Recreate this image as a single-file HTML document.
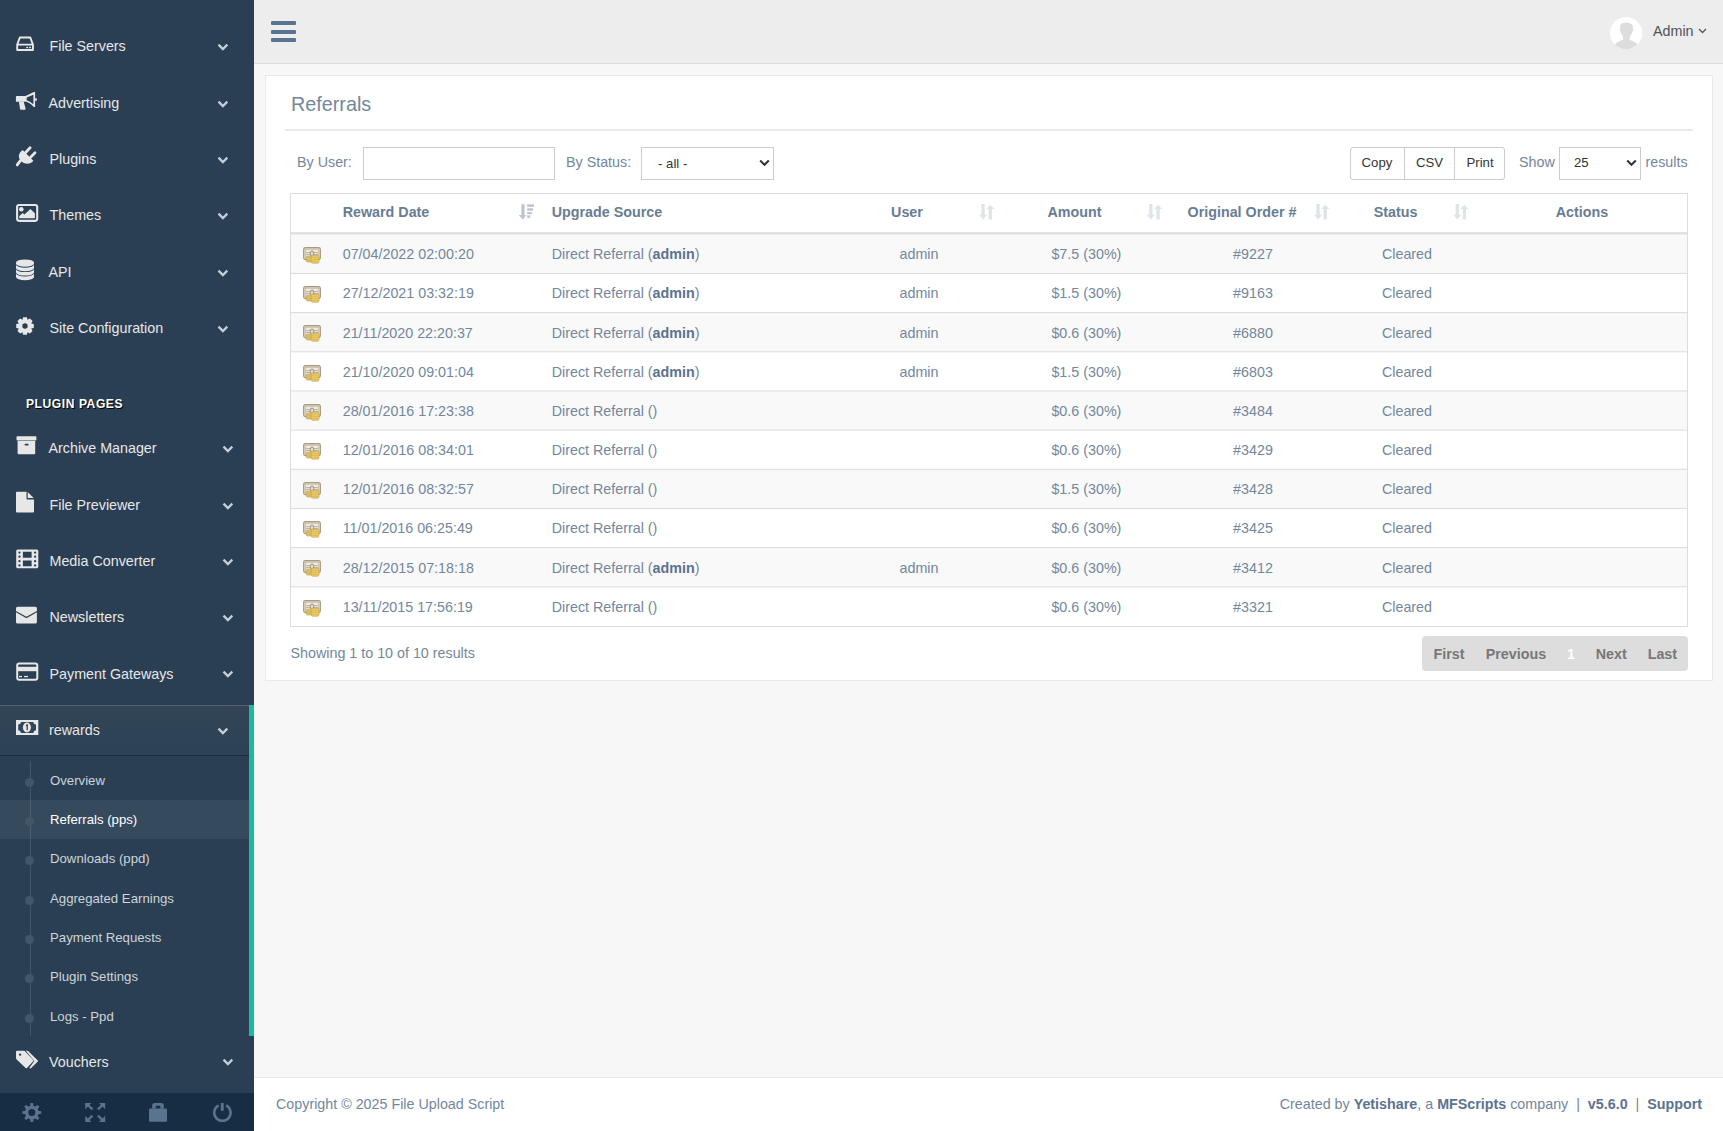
<!DOCTYPE html>
<html><head><meta charset="utf-8"><title>Referrals</title><style>
*{box-sizing:border-box;margin:0;padding:0}
html,body{width:1723px;height:1131px;overflow:hidden}
body{font-family:"Liberation Sans",sans-serif;background:#F7F7F7;color:#73879C;font-size:14.3px;position:relative}
.a{position:absolute;white-space:nowrap}
#side{position:absolute;left:0;top:0;width:254px;height:1131px;background:#2A3F54;overflow:hidden}
.mi{position:absolute;left:0;width:254px;height:20px;line-height:20px;color:#E7E7E7;font-size:14.3px}
.mi .t{position:absolute;top:0}
.mi svg.ic{position:absolute}
.chev{position:absolute;left:217px;top:7px}
.sec{position:absolute;left:26px;color:#fff;font-weight:bold;font-size:12.1px;letter-spacing:.55px;text-shadow:1px 1px #000;line-height:14px}
.ci{position:absolute;left:0;width:249px;height:39px}
.ci .t{position:absolute;left:50px;top:0;line-height:20px;font-size:13.2px;color:rgba(255,255,255,.75)}
.ci .dot{position:absolute;left:25px;width:9px;height:9px;border-radius:50%;background:#425668}
#top{position:absolute;left:254px;top:0;width:1469px;height:64px;background:#EDEDED;border-bottom:1px solid #D9DEE4}
#panel{position:absolute;left:265px;top:75px;width:1448px;height:606px;background:#fff;border:1px solid #E6E9ED}
.box{position:absolute;border:1px solid #ccc;background:#fff}
#tbl{position:absolute;left:290px;top:193px;width:1398px;border:1px solid #ddd}
.row{position:absolute;left:0;width:1396px;height:39px;border-top:1px solid #ddd}
.row.odd{background:#f9f9f9}
.cell{position:absolute;white-space:nowrap;line-height:20px}
.th{font-weight:bold;color:#5A738E}
#foot{position:absolute;left:254px;top:1077px;width:1469px;height:54px;background:#fff;border-top:1px solid #E6E9ED}
</style></head><body>
<div id="side">
<div class="a" style="left:49.5px;top:36.15px;line-height:20px;color:#E7E7E7">File Servers</div>
<svg class="a" style="left:217.2px;top:42.90px" width="12" height="9" viewBox="0 0 12 9"><path d="M1.5 1.6 L5.9 6 L10.3 1.6" fill="none" stroke="#C4CFDA" stroke-width="2.3"/></svg>
<div class="a" style="left:48.5px;top:93.05px;line-height:20px;color:#E7E7E7">Advertising</div>
<svg class="a" style="left:217.2px;top:99.80px" width="12" height="9" viewBox="0 0 12 9"><path d="M1.5 1.6 L5.9 6 L10.3 1.6" fill="none" stroke="#C4CFDA" stroke-width="2.3"/></svg>
<div class="a" style="left:49.5px;top:149.05px;line-height:20px;color:#E7E7E7">Plugins</div>
<svg class="a" style="left:217.2px;top:155.80px" width="12" height="9" viewBox="0 0 12 9"><path d="M1.5 1.6 L5.9 6 L10.3 1.6" fill="none" stroke="#C4CFDA" stroke-width="2.3"/></svg>
<div class="a" style="left:49.5px;top:204.85px;line-height:20px;color:#E7E7E7">Themes</div>
<svg class="a" style="left:217.2px;top:211.60px" width="12" height="9" viewBox="0 0 12 9"><path d="M1.5 1.6 L5.9 6 L10.3 1.6" fill="none" stroke="#C4CFDA" stroke-width="2.3"/></svg>
<div class="a" style="left:48.5px;top:261.85px;line-height:20px;color:#E7E7E7">API</div>
<svg class="a" style="left:217.2px;top:268.60px" width="12" height="9" viewBox="0 0 12 9"><path d="M1.5 1.6 L5.9 6 L10.3 1.6" fill="none" stroke="#C4CFDA" stroke-width="2.3"/></svg>
<div class="a" style="left:49.5px;top:318.25px;line-height:20px;color:#E7E7E7">Site Configuration</div>
<svg class="a" style="left:217.2px;top:325.00px" width="12" height="9" viewBox="0 0 12 9"><path d="M1.5 1.6 L5.9 6 L10.3 1.6" fill="none" stroke="#C4CFDA" stroke-width="2.3"/></svg>
<div class="a" style="left:48.5px;top:437.85px;line-height:20px;color:#E7E7E7">Archive Manager</div>
<svg class="a" style="left:221.7px;top:444.60px" width="12" height="9" viewBox="0 0 12 9"><path d="M1.5 1.6 L5.9 6 L10.3 1.6" fill="none" stroke="#C4CFDA" stroke-width="2.3"/></svg>
<div class="a" style="left:49.5px;top:494.75px;line-height:20px;color:#E7E7E7">File Previewer</div>
<svg class="a" style="left:221.7px;top:501.50px" width="12" height="9" viewBox="0 0 12 9"><path d="M1.5 1.6 L5.9 6 L10.3 1.6" fill="none" stroke="#C4CFDA" stroke-width="2.3"/></svg>
<div class="a" style="left:49.5px;top:550.95px;line-height:20px;color:#E7E7E7">Media Converter</div>
<svg class="a" style="left:221.7px;top:557.70px" width="12" height="9" viewBox="0 0 12 9"><path d="M1.5 1.6 L5.9 6 L10.3 1.6" fill="none" stroke="#C4CFDA" stroke-width="2.3"/></svg>
<div class="a" style="left:49.5px;top:606.75px;line-height:20px;color:#E7E7E7">Newsletters</div>
<svg class="a" style="left:221.7px;top:613.50px" width="12" height="9" viewBox="0 0 12 9"><path d="M1.5 1.6 L5.9 6 L10.3 1.6" fill="none" stroke="#C4CFDA" stroke-width="2.3"/></svg>
<div class="a" style="left:49.5px;top:663.65px;line-height:20px;color:#E7E7E7">Payment Gateways</div>
<svg class="a" style="left:221.7px;top:670.40px" width="12" height="9" viewBox="0 0 12 9"><path d="M1.5 1.6 L5.9 6 L10.3 1.6" fill="none" stroke="#C4CFDA" stroke-width="2.3"/></svg>
<div class="sec" style="top:397.30px">PLUGIN PAGES</div>
<div style="position:absolute;left:0;top:704.5px;width:249px;height:50px;background:linear-gradient(#334556,#2C4257);box-shadow:rgba(0,0,0,.25) 0 1px 0, inset rgba(255,255,255,.16) 0 1px 0"></div>
<div style="position:absolute;left:249px;top:704.5px;width:5px;height:331px;background:#1ABB9C"></div>
<div class="a" style="left:49px;top:719.85px;line-height:20px;color:#E7E7E7;text-shadow:rgba(0,0,0,.25) 0 -1px 0">rewards</div>
<svg class="a" style="left:217.2px;top:726.60px" width="12" height="9" viewBox="0 0 12 9"><path d="M1.5 1.6 L5.9 6 L10.3 1.6" fill="none" stroke="#C4CFDA" stroke-width="2.3"/></svg>
<div style="position:absolute;left:29.5px;top:760.5px;width:1px;height:275px;background:#425668"></div>
<div style="position:absolute;left:0;top:799.8px;width:249px;height:39.7px;background:rgba(255,255,255,.06)"></div>
<div class="a" style="left:25px;top:777.50px;width:9px;height:9px;border-radius:50%;background:#425668"></div>
<div class="a" style="left:50px;top:770.53px;line-height:20px;font-size:13.2px;color:rgba(255,255,255,.78)">Overview</div>
<div class="a" style="left:25px;top:816.85px;width:9px;height:9px;border-radius:50%;background:#425668"></div>
<div class="a" style="left:50px;top:809.88px;line-height:20px;font-size:13.2px;color:#fff">Referrals (pps)</div>
<div class="a" style="left:25px;top:856.20px;width:9px;height:9px;border-radius:50%;background:#425668"></div>
<div class="a" style="left:50px;top:849.23px;line-height:20px;font-size:13.2px;color:rgba(255,255,255,.78)">Downloads (ppd)</div>
<div class="a" style="left:25px;top:895.55px;width:9px;height:9px;border-radius:50%;background:#425668"></div>
<div class="a" style="left:50px;top:888.58px;line-height:20px;font-size:13.2px;color:rgba(255,255,255,.78)">Aggregated Earnings</div>
<div class="a" style="left:25px;top:934.90px;width:9px;height:9px;border-radius:50%;background:#425668"></div>
<div class="a" style="left:50px;top:927.93px;line-height:20px;font-size:13.2px;color:rgba(255,255,255,.78)">Payment Requests</div>
<div class="a" style="left:25px;top:974.25px;width:9px;height:9px;border-radius:50%;background:#425668"></div>
<div class="a" style="left:50px;top:967.28px;line-height:20px;font-size:13.2px;color:rgba(255,255,255,.78)">Plugin Settings</div>
<div class="a" style="left:25px;top:1013.60px;width:9px;height:9px;border-radius:50%;background:#425668"></div>
<div class="a" style="left:50px;top:1006.63px;line-height:20px;font-size:13.2px;color:rgba(255,255,255,.78)">Logs - Ppd</div>
<div class="a" style="left:49px;top:1051.55px;line-height:20px;color:#E7E7E7">Vouchers</div>
<svg class="a" style="left:221.7px;top:1058.30px" width="12" height="9" viewBox="0 0 12 9"><path d="M1.5 1.6 L5.9 6 L10.3 1.6" fill="none" stroke="#C4CFDA" stroke-width="2.3"/></svg>
<div style="position:absolute;left:0;top:1093px;width:254px;height:38px;background:#172D44"></div>
<svg class="a" style="left:0;top:0" width="254" height="1131" viewBox="0 0 254 1131"><path d="M19.9 37.45 L30.2 37.45 L32.95 44.6 V49.95 H17.2 V44.6 Z M17.2 44.6 H32.95" fill="none" stroke="#E7E7E7" stroke-width="1.9" stroke-linejoin="round"/><rect x="26.2" y="46.8" width="1.9" height="1.4" fill="#E7E7E7"/><rect x="29.1" y="46.8" width="1.9" height="1.4" fill="#E7E7E7"/><path d="M16.8 96 H25.2 V101.8 H16.8 Q15.9 101.8 15.9 100.9 V96.9 Q15.9 96 16.8 96 Z" fill="#E7E7E7"/><path d="M18.9 101.5 H23.6 L25.6 108.6 Q25.8 109.8 24.6 109.8 H21.2 Q20.2 109.8 20 108.8 Z" fill="#E7E7E7"/><path fill-rule="evenodd" d="M25 96.2 L33.8 92 H35.1 V106.9 H33.8 Q29.5 102.2 25 101.6 Z M26.7 97.6 L33.4 94.7 V104.3 Q30 101.2 26.7 100.2 Z" fill="#E7E7E7"/><rect x="34.8" y="98.3" width="2.1" height="2.4" rx="0.8" fill="#E7E7E7"/><path d="M30.1 147.8 L25.6 152.4 M35 152.7 L30.5 157.4 M20.6 160.4 L17.2 164.9" stroke="#E7E7E7" stroke-width="2.8" stroke-linecap="round" fill="none"/><path d="M22.6 150 L33.4 160.8 C31.5 163.5 27.5 164.2 24.5 163.2 C21 162 18.6 158.8 18.9 155.5 C19.1 153.4 20.6 151.5 22.6 150 Z" fill="#E7E7E7"/><rect x="17.1" y="205.05" width="20.1" height="15.8" rx="2" fill="none" stroke="#E7E7E7" stroke-width="2.1"/><circle cx="21.3" cy="209.3" r="2.3" fill="#E7E7E7"/><path d="M19.2 218.2 V216.3 L22.7 212.9 L24.4 214.4 L30.4 208.9 L34.9 213.3 V218.2 Z" fill="#E7E7E7"/><path d="M16 262.7 A9 3.3 0 0 1 34 262.7 V263.5 A9 3.3 0 0 1 16 263.5 Z" fill="#E7E7E7"/><path d="M16 264.50 A9 3.2 0 0 0 34 264.50 V267.90 A9 3.3 0 0 1 16 267.90 Z" fill="#E7E7E7"/><path d="M16 268.90 A9 3.2 0 0 0 34 268.90 V272.30 A9 3.3 0 0 1 16 272.30 Z" fill="#E7E7E7"/><path d="M16 273.30 A9 3.2 0 0 0 34 273.30 V276.90 A9 3.3 0 0 1 16 276.90 Z" fill="#E7E7E7"/><path fill-rule="evenodd" d="M22.46 319.80 L23.11 317.20 L26.89 317.20 L27.54 319.80 L27.59 319.82 L29.89 318.44 L32.56 321.11 L31.18 323.41 L31.20 323.46 L33.80 324.11 L33.80 327.89 L31.20 328.54 L31.18 328.59 L32.56 330.89 L29.89 333.56 L27.59 332.18 L27.54 332.20 L26.89 334.80 L23.11 334.80 L22.46 332.20 L22.41 332.18 L20.11 333.56 L17.44 330.89 L18.82 328.59 L18.80 328.54 L16.20 327.89 L16.20 324.11 L18.80 323.46 L18.82 323.41 L17.44 321.11 L20.11 318.44 L22.41 319.82 Z M27.7 326 A2.7 2.7 0 1 0 22.3 326 A2.7 2.7 0 1 0 27.7 326 Z" fill="#E7E7E7"/><rect x="16.5" y="436.2" width="19.9" height="4.3" rx="0.9" fill="#E7E7E7"/><path fill-rule="evenodd" d="M17.6 441 H35.2 V453.3 Q35.2 454.3 34.2 454.3 H18.6 Q17.6 454.3 17.6 453.3 Z M25.5 443.7 H27.8 Q28.7 443.7 28.7 444.6 Q28.7 445.5 27.8 445.5 H25.5 Q24.6 445.5 24.6 444.6 Q24.6 443.7 25.5 443.7 Z" fill="#E7E7E7"/><path d="M16 492.7 Q16 491.7 17 491.7 H26.5 V498.5 Q26.5 499.6 27.6 499.6 H34 V511.4 Q34 512.4 33 512.4 H17 Q16 512.4 16 511.4 Z" fill="#E7E7E7"/><path d="M27.7 492 L33.7 498.1 H27.7 Z" fill="#E7E7E7"/><path fill-rule="evenodd" d="M17.7 549.4 H36.8 Q38.3 549.4 38.3 550.9 V566.8 Q38.3 568.3 36.8 568.3 H17.7 Q16.2 568.3 16.2 566.8 V550.9 Q16.2 549.4 17.7 549.4 Z M22.9 551.7 H31.6 V557.7 H22.9 Z M22.9 560.4 H31.6 V566.3 H22.9 Z" fill="#E7E7E7"/><circle cx="19.45" cy="552.6" r="1.15" fill="#2A3F54"/><circle cx="35.1" cy="552.6" r="1.15" fill="#2A3F54"/><circle cx="19.45" cy="556.7" r="1.15" fill="#2A3F54"/><circle cx="35.1" cy="556.7" r="1.15" fill="#2A3F54"/><circle cx="19.45" cy="561.2" r="1.15" fill="#2A3F54"/><circle cx="35.1" cy="561.2" r="1.15" fill="#2A3F54"/><circle cx="19.45" cy="565.4" r="1.15" fill="#2A3F54"/><circle cx="35.1" cy="565.4" r="1.15" fill="#2A3F54"/><path d="M16 608.3 Q16 606.7 17.6 606.7 H35.3 Q36.9 606.7 36.9 608.3 V610.9 L26.45 616.8 L16 610.9 Z" fill="#E7E7E7"/><path d="M16 612.35 L26.45 618.25 L36.9 612.35 V621.9 Q36.9 623.5 35.3 623.5 H17.6 Q16 623.5 16 621.9 Z" fill="#E7E7E7"/><rect x="17.2" y="663.5" width="20.1" height="16.3" rx="2" fill="none" stroke="#E7E7E7" stroke-width="2"/><rect x="17" y="666.8" width="20.5" height="4.4" fill="#E7E7E7"/><rect x="19" y="675.9" width="3" height="1.3" fill="#E7E7E7"/><rect x="24" y="675.9" width="4" height="1.3" fill="#E7E7E7"/><rect x="16" y="720" width="22.3" height="15" fill="#E7E7E7"/><path d="M21 721.9 H33.3 Q33.6 724.4 36 724.5 V730.3 Q33.6 730.4 33.3 732.9 H21 Q20.7 730.4 18.2 730.3 V724.5 Q20.7 724.4 21 721.9 Z" fill="#30465B"/><ellipse cx="26.9" cy="727.5" rx="4" ry="5" fill="#E7E7E7"/><path d="M26.3 724.6 L27.9 724.1 V730.2 H26.6 V726 L25.6 726.5 Z" fill="#30465B"/><path fill-rule="evenodd" d="M17.3 1050.7 H24.5 L33.2 1059.9 Q33.8 1060.6 33.2 1061.3 L27.2 1067.8 Q26.5 1068.6 25.7 1067.9 L16.6 1059.5 Q16 1058.9 16 1058 V1052 Q16 1050.7 17.3 1050.7 Z M21.3 1054.6 A1.2 1.2 0 1 0 18.9 1054.6 A1.2 1.2 0 1 0 21.3 1054.6 Z" fill="#E7E7E7"/><path d="M25.8 1050.7 H27.8 L37.8 1060.4 Q38.2 1060.9 37.8 1061.4 L31.2 1068.1 Q30.8 1068.5 30.2 1068.4 L29.3 1068 L34.3 1060.9 Z" fill="#E7E7E7"/><path fill-rule="evenodd" d="M30.02 1105.94 L30.50 1103.09 L33.10 1103.09 L33.58 1105.94 L35.18 1106.60 L37.54 1104.93 L39.37 1106.76 L37.70 1109.12 L38.36 1110.72 L41.21 1111.20 L41.21 1113.80 L38.36 1114.28 L37.70 1115.88 L39.37 1118.24 L37.54 1120.07 L35.18 1118.40 L33.58 1119.06 L33.10 1121.91 L30.50 1121.91 L30.02 1119.06 L28.42 1118.40 L26.06 1120.07 L24.23 1118.24 L25.90 1115.88 L25.24 1114.28 L22.39 1113.80 L22.39 1111.20 L25.24 1110.72 L25.90 1109.12 L24.23 1106.76 L26.06 1104.93 L28.42 1106.60 Z M35.3 1112.5 A3.5 3.5 0 1 0 28.3 1112.5 A3.5 3.5 0 1 0 35.3 1112.5 Z" fill="#5A738E"/><path d="M85.2 1103 H91.5 L89.5 1105 L93.3 1108.6 L91.6 1110.3 L87.9 1106.6 L85.2 1109.3 Z M105.2 1103 H98.9 L100.9 1105 L97.1 1108.6 L98.8 1110.3 L102.5 1106.6 L105.2 1109.3 Z M85.2 1122 H91.5 L89.5 1120 L93.3 1116.4 L91.6 1114.7 L87.9 1118.4 L85.2 1115.7 Z M105.2 1122 H98.9 L100.9 1120 L97.1 1116.4 L98.8 1114.7 L102.5 1118.4 L105.2 1115.7 Z" fill="#5A738E"/><path fill-rule="evenodd" d="M152.2 1108.6 V1105.5 Q152.2 1103 154.7 1103 H161.3 Q163.8 1103 163.8 1105.5 V1108.6 H160.3 V1105.8 H155.8 V1108.6 Z" fill="#5A738E"/><rect x="149" y="1108.5" width="18" height="13.3" rx="1" fill="#5A738E"/><path d="M218.6 1105.4 A8.2 8.2 0 1 0 226.2 1105.4" fill="none" stroke="#5A738E" stroke-width="2.5"/><rect x="220.8" y="1103" width="2.9" height="7.8" fill="#5A738E"/></svg>
</div>
<div id="top"></div>
<div class="a" style="left:270.5px;top:21px;width:25px;height:4px;border-radius:1px;background:#5A738E"></div>
<div class="a" style="left:270.5px;top:30px;width:25px;height:4px;border-radius:1px;background:#5A738E"></div>
<div class="a" style="left:270.5px;top:38px;width:25px;height:4px;border-radius:1px;background:#5A738E"></div>
<svg class="a" style="left:1609.9px;top:16.7px" width="32.3" height="32.3" viewBox="0 0 32.3 32.3"><defs><clipPath id="cc"><circle cx="16.15" cy="16.15" r="16.15"/></clipPath></defs><circle cx="16.15" cy="16.15" r="16.15" fill="#fff"/><g clip-path="url(#cc)" fill="#DDDDDD"><path d="M10.2 11 Q9.6 6.4 13.5 6 Q15.5 5.2 18.5 6 Q23.6 6.6 22.9 11.5 Q24.2 13 22.6 14.6 Q21.8 17.5 19.8 19.2 V23 H13.1 V19.2 Q11 17.5 10.4 14.6 Q8.9 13 10.2 11 Z"/><ellipse cx="16.15" cy="31.5" rx="12.3" ry="8.9"/></g></svg>
<div class="a" style="left:1653px;top:20.85px;line-height:20px;font-size:14.3px;color:#515356">Admin</div>
<svg class="a" style="left:1698.2px;top:28.3px" width="9" height="6" viewBox="0 0 9 6"><path d="M1 1 L4.5 4.5 L8 1" fill="none" stroke="#515356" stroke-width="1.3"/></svg>
<div id="panel"></div>
<div class="a" style="left:291px;top:92.14px;font-size:19.8px;line-height:24px;color:#73879C">Referrals</div>
<div class="a" style="left:285px;top:129px;width:1408px;height:2px;background:#E6E9ED"></div>
<div class="a" style="left:297px;top:151.75px;line-height:20px">By User:</div>
<div class="box" style="left:363px;top:147px;width:192px;height:33px"></div>
<div class="a" style="left:566px;top:151.75px;line-height:20px">By Status:</div>
<div class="box" style="left:641px;top:147px;width:133px;height:33px;border-color:#ccc"></div>
<div class="a" style="left:658px;top:153.93px;line-height:20px;color:#333;font-size:13.2px">- all -</div>
<svg class="a" style="left:759px;top:159px" width="11" height="8" viewBox="0 0 11 8"><path d="M1.2 1.5 L5.5 5.8 L9.8 1.5" fill="none" stroke="#333" stroke-width="2"/></svg>
<div class="a" style="left:1350px;top:147px;width:155px;height:33px;border:1px solid #ccc;border-radius:3px;background:#fff"></div>
<div class="a" style="left:1404px;top:148px;width:1px;height:31px;background:#ccc"></div>
<div class="a" style="left:1454px;top:148px;width:1px;height:31px;background:#ccc"></div>
<div class="a" style="left:1350px;width:54px;text-align:center;top:152.93px;line-height:20px;color:#333;font-size:13.2px">Copy</div>
<div class="a" style="left:1405px;width:49px;text-align:center;top:152.93px;line-height:20px;color:#333;font-size:13.2px">CSV</div>
<div class="a" style="left:1455px;width:50px;text-align:center;top:152.93px;line-height:20px;color:#333;font-size:13.2px">Print</div>
<div class="a" style="left:1519px;top:151.55px;line-height:20px">Show</div>
<div class="box" style="left:1559px;top:147px;width:82px;height:33px"></div>
<div class="a" style="left:1574px;top:152.93px;line-height:20px;color:#333;font-size:13.2px">25</div>
<svg class="a" style="left:1626px;top:159px" width="11" height="8" viewBox="0 0 11 8"><path d="M1.2 1.5 L5.5 5.8 L9.8 1.5" fill="none" stroke="#333" stroke-width="2"/></svg>
<div class="a" style="left:1645.5px;top:151.55px;line-height:20px">results</div>
<div class="a" style="left:290px;top:193px;width:1398px;height:434px;border:1px solid #ddd;background:#fff"></div>
<div class="a" style="left:342.7px;top:202.05px;line-height:20px;font-weight:bold;color:#687D93">Reward Date</div>
<div class="a" style="left:551.7px;top:202.05px;line-height:20px;font-weight:bold;color:#687D93">Upgrade Source</div>
<div class="a" style="left:807.0px;width:200px;text-align:center;top:202.05px;line-height:20px;font-weight:bold;color:#687D93">User</div>
<div class="a" style="left:974.4px;width:200px;text-align:center;top:202.05px;line-height:20px;font-weight:bold;color:#687D93">Amount</div>
<div class="a" style="left:1142.0px;width:200px;text-align:center;top:202.05px;line-height:20px;font-weight:bold;color:#687D93">Original Order #</div>
<div class="a" style="left:1295.5px;width:200px;text-align:center;top:202.05px;line-height:20px;font-weight:bold;color:#687D93">Status</div>
<div class="a" style="left:1482.0px;width:200px;text-align:center;top:202.05px;line-height:20px;font-weight:bold;color:#687D93">Actions</div>
<svg class="a" style="left:0;top:0;overflow:visible" width="1" height="1"><path d="M521.4 204.2 H524.5 V215 H526.2 L522.95 219.5 L518.8 215 H521.4 Z" fill="#B9C4CF"/><rect x="527.2" y="204.4" width="6.8" height="2.4" fill="#B9C4CF"/><rect x="527.2" y="208.3" width="5.8" height="2.4" fill="#B9C4CF"/><rect x="527.2" y="212" width="4.6" height="2.2" fill="#B9C4CF"/><rect x="527.2" y="215.4" width="3.1" height="2.4" fill="#B9C4CF"/></svg>
<svg class="a" style="left:0;top:0;overflow:visible" width="1" height="1"><path d="M981.40 204 H984.70 V214.8 H987.00 L983.05 219.4 L979.10 214.8 H981.40 Z M988.60 219.4 H991.90 V208.9 H994.30 L990.25 204.8 L986.20 208.9 H988.60 Z" fill="#DFE4E9"/></svg>
<svg class="a" style="left:0;top:0;overflow:visible" width="1" height="1"><path d="M1149.20 204 H1152.50 V214.8 H1154.80 L1150.85 219.4 L1146.90 214.8 H1149.20 Z M1156.40 219.4 H1159.70 V208.9 H1162.10 L1158.05 204.8 L1154.00 208.9 H1156.40 Z" fill="#DFE4E9"/></svg>
<svg class="a" style="left:0;top:0;overflow:visible" width="1" height="1"><path d="M1316.40 204 H1319.70 V214.8 H1322.00 L1318.05 219.4 L1314.10 214.8 H1316.40 Z M1323.60 219.4 H1326.90 V208.9 H1329.30 L1325.25 204.8 L1321.20 208.9 H1323.60 Z" fill="#DFE4E9"/></svg>
<svg class="a" style="left:0;top:0;overflow:visible" width="1" height="1"><path d="M1455.60 204 H1458.90 V214.8 H1461.20 L1457.25 219.4 L1453.30 214.8 H1455.60 Z M1462.80 219.4 H1466.10 V208.9 H1468.50 L1464.45 204.8 L1460.40 208.9 H1462.80 Z" fill="#DFE4E9"/></svg>
<div class="a" style="left:291px;top:232px;width:1396px;height:1px;background:#E4E4E4"></div><div class="a" style="left:291px;top:233px;width:1396px;height:1px;background:#DDDDDD"></div><div class="a" style="left:291px;top:234px;width:1396px;height:1px;background:#EDEDED"></div>
<svg class="a" style="left:0;top:0" width="1723" height="700" viewBox="0 0 1723 700"><rect x="291" y="235.00" width="1396" height="37.85" fill="#F9F9F9"/><rect x="291" y="313.13" width="1396" height="38.08" fill="#F9F9F9"/><rect x="291" y="391.49" width="1396" height="38.08" fill="#F9F9F9"/><rect x="291" y="469.85" width="1396" height="38.08" fill="#F9F9F9"/><rect x="291" y="548.21" width="1396" height="38.08" fill="#F9F9F9"/><rect x="291" y="272.85" width="1396" height="1.1" fill="#DDDDDD"/><rect x="291" y="312.03" width="1396" height="1.1" fill="#DDDDDD"/><rect x="291" y="351.21" width="1396" height="1.1" fill="#DDDDDD"/><rect x="291" y="390.39" width="1396" height="1.1" fill="#DDDDDD"/><rect x="291" y="429.57" width="1396" height="1.1" fill="#DDDDDD"/><rect x="291" y="468.75" width="1396" height="1.1" fill="#DDDDDD"/><rect x="291" y="507.93" width="1396" height="1.1" fill="#DDDDDD"/><rect x="291" y="547.11" width="1396" height="1.1" fill="#DDDDDD"/><rect x="291" y="586.29" width="1396" height="1.1" fill="#DDDDDD"/></svg>
<svg class="a" style="left:303px;top:247.0px" width="18" height="17" viewBox="0 0 18 17"><rect x="0.6" y="0.6" width="16.8" height="12" rx="1.8" fill="#DCD2C0" stroke="#A79A85" stroke-width="1.1"/><rect x="2.3" y="2.4" width="13.4" height="8.4" fill="#EFE9DE" stroke="#C2B6A2" stroke-width=".6"/><ellipse cx="9" cy="6.6" rx="1.8" ry="2.6" fill="#E4DCCD" stroke="#8F8370" stroke-width=".9"/><path d="M3 5.6h4M3 7.6h4M11 5.6h4M11 7.6h4" stroke="#B5A994" stroke-width=".9"/><rect x="3.3" y="9.2" width="5.2" height="5.8" rx="1.2" fill="#E3C163" stroke="#BF9E45" stroke-width=".6"/><rect x="8.2" y="8.2" width="7.8" height="8" rx="1.4" fill="#EACB6C" stroke="#BF9E45" stroke-width=".6"/><path d="M8.8 10.3h6.6M8.8 12.3h6.6M8.8 14.3h6.6M3.8 11.3h4.3M3.8 13.3h4.3" stroke="#D0AF52" stroke-width=".6"/></svg>
<div class="a" style="left:342.7px;top:244.15px;line-height:20px;">07/04/2022 02:00:20</div>
<div class="a" style="left:551.7px;top:244.15px;line-height:20px;">Direct Referral (<b style="color:#5A738E">admin</b>)</div>
<div class="a" style="left:819.0px;width:200px;text-align:center;top:244.15px;line-height:20px;">admin</div>
<div class="a" style="left:986.4px;width:200px;text-align:center;top:244.15px;line-height:20px;">$7.5 (30%)</div>
<div class="a" style="left:1153.0px;width:200px;text-align:center;top:244.15px;line-height:20px;">#9227</div>
<div class="a" style="left:1307.0px;width:200px;text-align:center;top:244.15px;line-height:20px;">Cleared</div>
<svg class="a" style="left:303px;top:286.2px" width="18" height="17" viewBox="0 0 18 17"><rect x="0.6" y="0.6" width="16.8" height="12" rx="1.8" fill="#DCD2C0" stroke="#A79A85" stroke-width="1.1"/><rect x="2.3" y="2.4" width="13.4" height="8.4" fill="#EFE9DE" stroke="#C2B6A2" stroke-width=".6"/><ellipse cx="9" cy="6.6" rx="1.8" ry="2.6" fill="#E4DCCD" stroke="#8F8370" stroke-width=".9"/><path d="M3 5.6h4M3 7.6h4M11 5.6h4M11 7.6h4" stroke="#B5A994" stroke-width=".9"/><rect x="3.3" y="9.2" width="5.2" height="5.8" rx="1.2" fill="#E3C163" stroke="#BF9E45" stroke-width=".6"/><rect x="8.2" y="8.2" width="7.8" height="8" rx="1.4" fill="#EACB6C" stroke="#BF9E45" stroke-width=".6"/><path d="M8.8 10.3h6.6M8.8 12.3h6.6M8.8 14.3h6.6M3.8 11.3h4.3M3.8 13.3h4.3" stroke="#D0AF52" stroke-width=".6"/></svg>
<div class="a" style="left:342.7px;top:283.33px;line-height:20px;">27/12/2021 03:32:19</div>
<div class="a" style="left:551.7px;top:283.33px;line-height:20px;">Direct Referral (<b style="color:#5A738E">admin</b>)</div>
<div class="a" style="left:819.0px;width:200px;text-align:center;top:283.33px;line-height:20px;">admin</div>
<div class="a" style="left:986.4px;width:200px;text-align:center;top:283.33px;line-height:20px;">$1.5 (30%)</div>
<div class="a" style="left:1153.0px;width:200px;text-align:center;top:283.33px;line-height:20px;">#9163</div>
<div class="a" style="left:1307.0px;width:200px;text-align:center;top:283.33px;line-height:20px;">Cleared</div>
<svg class="a" style="left:303px;top:325.4px" width="18" height="17" viewBox="0 0 18 17"><rect x="0.6" y="0.6" width="16.8" height="12" rx="1.8" fill="#DCD2C0" stroke="#A79A85" stroke-width="1.1"/><rect x="2.3" y="2.4" width="13.4" height="8.4" fill="#EFE9DE" stroke="#C2B6A2" stroke-width=".6"/><ellipse cx="9" cy="6.6" rx="1.8" ry="2.6" fill="#E4DCCD" stroke="#8F8370" stroke-width=".9"/><path d="M3 5.6h4M3 7.6h4M11 5.6h4M11 7.6h4" stroke="#B5A994" stroke-width=".9"/><rect x="3.3" y="9.2" width="5.2" height="5.8" rx="1.2" fill="#E3C163" stroke="#BF9E45" stroke-width=".6"/><rect x="8.2" y="8.2" width="7.8" height="8" rx="1.4" fill="#EACB6C" stroke="#BF9E45" stroke-width=".6"/><path d="M8.8 10.3h6.6M8.8 12.3h6.6M8.8 14.3h6.6M3.8 11.3h4.3M3.8 13.3h4.3" stroke="#D0AF52" stroke-width=".6"/></svg>
<div class="a" style="left:342.7px;top:322.51px;line-height:20px;">21/11/2020 22:20:37</div>
<div class="a" style="left:551.7px;top:322.51px;line-height:20px;">Direct Referral (<b style="color:#5A738E">admin</b>)</div>
<div class="a" style="left:819.0px;width:200px;text-align:center;top:322.51px;line-height:20px;">admin</div>
<div class="a" style="left:986.4px;width:200px;text-align:center;top:322.51px;line-height:20px;">$0.6 (30%)</div>
<div class="a" style="left:1153.0px;width:200px;text-align:center;top:322.51px;line-height:20px;">#6880</div>
<div class="a" style="left:1307.0px;width:200px;text-align:center;top:322.51px;line-height:20px;">Cleared</div>
<svg class="a" style="left:303px;top:364.5px" width="18" height="17" viewBox="0 0 18 17"><rect x="0.6" y="0.6" width="16.8" height="12" rx="1.8" fill="#DCD2C0" stroke="#A79A85" stroke-width="1.1"/><rect x="2.3" y="2.4" width="13.4" height="8.4" fill="#EFE9DE" stroke="#C2B6A2" stroke-width=".6"/><ellipse cx="9" cy="6.6" rx="1.8" ry="2.6" fill="#E4DCCD" stroke="#8F8370" stroke-width=".9"/><path d="M3 5.6h4M3 7.6h4M11 5.6h4M11 7.6h4" stroke="#B5A994" stroke-width=".9"/><rect x="3.3" y="9.2" width="5.2" height="5.8" rx="1.2" fill="#E3C163" stroke="#BF9E45" stroke-width=".6"/><rect x="8.2" y="8.2" width="7.8" height="8" rx="1.4" fill="#EACB6C" stroke="#BF9E45" stroke-width=".6"/><path d="M8.8 10.3h6.6M8.8 12.3h6.6M8.8 14.3h6.6M3.8 11.3h4.3M3.8 13.3h4.3" stroke="#D0AF52" stroke-width=".6"/></svg>
<div class="a" style="left:342.7px;top:361.69px;line-height:20px;">21/10/2020 09:01:04</div>
<div class="a" style="left:551.7px;top:361.69px;line-height:20px;">Direct Referral (<b style="color:#5A738E">admin</b>)</div>
<div class="a" style="left:819.0px;width:200px;text-align:center;top:361.69px;line-height:20px;">admin</div>
<div class="a" style="left:986.4px;width:200px;text-align:center;top:361.69px;line-height:20px;">$1.5 (30%)</div>
<div class="a" style="left:1153.0px;width:200px;text-align:center;top:361.69px;line-height:20px;">#6803</div>
<div class="a" style="left:1307.0px;width:200px;text-align:center;top:361.69px;line-height:20px;">Cleared</div>
<svg class="a" style="left:303px;top:403.7px" width="18" height="17" viewBox="0 0 18 17"><rect x="0.6" y="0.6" width="16.8" height="12" rx="1.8" fill="#DCD2C0" stroke="#A79A85" stroke-width="1.1"/><rect x="2.3" y="2.4" width="13.4" height="8.4" fill="#EFE9DE" stroke="#C2B6A2" stroke-width=".6"/><ellipse cx="9" cy="6.6" rx="1.8" ry="2.6" fill="#E4DCCD" stroke="#8F8370" stroke-width=".9"/><path d="M3 5.6h4M3 7.6h4M11 5.6h4M11 7.6h4" stroke="#B5A994" stroke-width=".9"/><rect x="3.3" y="9.2" width="5.2" height="5.8" rx="1.2" fill="#E3C163" stroke="#BF9E45" stroke-width=".6"/><rect x="8.2" y="8.2" width="7.8" height="8" rx="1.4" fill="#EACB6C" stroke="#BF9E45" stroke-width=".6"/><path d="M8.8 10.3h6.6M8.8 12.3h6.6M8.8 14.3h6.6M3.8 11.3h4.3M3.8 13.3h4.3" stroke="#D0AF52" stroke-width=".6"/></svg>
<div class="a" style="left:342.7px;top:400.87px;line-height:20px;">28/01/2016 17:23:38</div>
<div class="a" style="left:551.7px;top:400.87px;line-height:20px;">Direct Referral ()</div>
<div class="a" style="left:986.4px;width:200px;text-align:center;top:400.87px;line-height:20px;">$0.6 (30%)</div>
<div class="a" style="left:1153.0px;width:200px;text-align:center;top:400.87px;line-height:20px;">#3484</div>
<div class="a" style="left:1307.0px;width:200px;text-align:center;top:400.87px;line-height:20px;">Cleared</div>
<svg class="a" style="left:303px;top:442.9px" width="18" height="17" viewBox="0 0 18 17"><rect x="0.6" y="0.6" width="16.8" height="12" rx="1.8" fill="#DCD2C0" stroke="#A79A85" stroke-width="1.1"/><rect x="2.3" y="2.4" width="13.4" height="8.4" fill="#EFE9DE" stroke="#C2B6A2" stroke-width=".6"/><ellipse cx="9" cy="6.6" rx="1.8" ry="2.6" fill="#E4DCCD" stroke="#8F8370" stroke-width=".9"/><path d="M3 5.6h4M3 7.6h4M11 5.6h4M11 7.6h4" stroke="#B5A994" stroke-width=".9"/><rect x="3.3" y="9.2" width="5.2" height="5.8" rx="1.2" fill="#E3C163" stroke="#BF9E45" stroke-width=".6"/><rect x="8.2" y="8.2" width="7.8" height="8" rx="1.4" fill="#EACB6C" stroke="#BF9E45" stroke-width=".6"/><path d="M8.8 10.3h6.6M8.8 12.3h6.6M8.8 14.3h6.6M3.8 11.3h4.3M3.8 13.3h4.3" stroke="#D0AF52" stroke-width=".6"/></svg>
<div class="a" style="left:342.7px;top:440.05px;line-height:20px;">12/01/2016 08:34:01</div>
<div class="a" style="left:551.7px;top:440.05px;line-height:20px;">Direct Referral ()</div>
<div class="a" style="left:986.4px;width:200px;text-align:center;top:440.05px;line-height:20px;">$0.6 (30%)</div>
<div class="a" style="left:1153.0px;width:200px;text-align:center;top:440.05px;line-height:20px;">#3429</div>
<div class="a" style="left:1307.0px;width:200px;text-align:center;top:440.05px;line-height:20px;">Cleared</div>
<svg class="a" style="left:303px;top:482.1px" width="18" height="17" viewBox="0 0 18 17"><rect x="0.6" y="0.6" width="16.8" height="12" rx="1.8" fill="#DCD2C0" stroke="#A79A85" stroke-width="1.1"/><rect x="2.3" y="2.4" width="13.4" height="8.4" fill="#EFE9DE" stroke="#C2B6A2" stroke-width=".6"/><ellipse cx="9" cy="6.6" rx="1.8" ry="2.6" fill="#E4DCCD" stroke="#8F8370" stroke-width=".9"/><path d="M3 5.6h4M3 7.6h4M11 5.6h4M11 7.6h4" stroke="#B5A994" stroke-width=".9"/><rect x="3.3" y="9.2" width="5.2" height="5.8" rx="1.2" fill="#E3C163" stroke="#BF9E45" stroke-width=".6"/><rect x="8.2" y="8.2" width="7.8" height="8" rx="1.4" fill="#EACB6C" stroke="#BF9E45" stroke-width=".6"/><path d="M8.8 10.3h6.6M8.8 12.3h6.6M8.8 14.3h6.6M3.8 11.3h4.3M3.8 13.3h4.3" stroke="#D0AF52" stroke-width=".6"/></svg>
<div class="a" style="left:342.7px;top:479.23px;line-height:20px;">12/01/2016 08:32:57</div>
<div class="a" style="left:551.7px;top:479.23px;line-height:20px;">Direct Referral ()</div>
<div class="a" style="left:986.4px;width:200px;text-align:center;top:479.23px;line-height:20px;">$1.5 (30%)</div>
<div class="a" style="left:1153.0px;width:200px;text-align:center;top:479.23px;line-height:20px;">#3428</div>
<div class="a" style="left:1307.0px;width:200px;text-align:center;top:479.23px;line-height:20px;">Cleared</div>
<svg class="a" style="left:303px;top:521.3px" width="18" height="17" viewBox="0 0 18 17"><rect x="0.6" y="0.6" width="16.8" height="12" rx="1.8" fill="#DCD2C0" stroke="#A79A85" stroke-width="1.1"/><rect x="2.3" y="2.4" width="13.4" height="8.4" fill="#EFE9DE" stroke="#C2B6A2" stroke-width=".6"/><ellipse cx="9" cy="6.6" rx="1.8" ry="2.6" fill="#E4DCCD" stroke="#8F8370" stroke-width=".9"/><path d="M3 5.6h4M3 7.6h4M11 5.6h4M11 7.6h4" stroke="#B5A994" stroke-width=".9"/><rect x="3.3" y="9.2" width="5.2" height="5.8" rx="1.2" fill="#E3C163" stroke="#BF9E45" stroke-width=".6"/><rect x="8.2" y="8.2" width="7.8" height="8" rx="1.4" fill="#EACB6C" stroke="#BF9E45" stroke-width=".6"/><path d="M8.8 10.3h6.6M8.8 12.3h6.6M8.8 14.3h6.6M3.8 11.3h4.3M3.8 13.3h4.3" stroke="#D0AF52" stroke-width=".6"/></svg>
<div class="a" style="left:342.7px;top:518.41px;line-height:20px;">11/01/2016 06:25:49</div>
<div class="a" style="left:551.7px;top:518.41px;line-height:20px;">Direct Referral ()</div>
<div class="a" style="left:986.4px;width:200px;text-align:center;top:518.41px;line-height:20px;">$0.6 (30%)</div>
<div class="a" style="left:1153.0px;width:200px;text-align:center;top:518.41px;line-height:20px;">#3425</div>
<div class="a" style="left:1307.0px;width:200px;text-align:center;top:518.41px;line-height:20px;">Cleared</div>
<svg class="a" style="left:303px;top:560.4px" width="18" height="17" viewBox="0 0 18 17"><rect x="0.6" y="0.6" width="16.8" height="12" rx="1.8" fill="#DCD2C0" stroke="#A79A85" stroke-width="1.1"/><rect x="2.3" y="2.4" width="13.4" height="8.4" fill="#EFE9DE" stroke="#C2B6A2" stroke-width=".6"/><ellipse cx="9" cy="6.6" rx="1.8" ry="2.6" fill="#E4DCCD" stroke="#8F8370" stroke-width=".9"/><path d="M3 5.6h4M3 7.6h4M11 5.6h4M11 7.6h4" stroke="#B5A994" stroke-width=".9"/><rect x="3.3" y="9.2" width="5.2" height="5.8" rx="1.2" fill="#E3C163" stroke="#BF9E45" stroke-width=".6"/><rect x="8.2" y="8.2" width="7.8" height="8" rx="1.4" fill="#EACB6C" stroke="#BF9E45" stroke-width=".6"/><path d="M8.8 10.3h6.6M8.8 12.3h6.6M8.8 14.3h6.6M3.8 11.3h4.3M3.8 13.3h4.3" stroke="#D0AF52" stroke-width=".6"/></svg>
<div class="a" style="left:342.7px;top:557.59px;line-height:20px;">28/12/2015 07:18:18</div>
<div class="a" style="left:551.7px;top:557.59px;line-height:20px;">Direct Referral (<b style="color:#5A738E">admin</b>)</div>
<div class="a" style="left:819.0px;width:200px;text-align:center;top:557.59px;line-height:20px;">admin</div>
<div class="a" style="left:986.4px;width:200px;text-align:center;top:557.59px;line-height:20px;">$0.6 (30%)</div>
<div class="a" style="left:1153.0px;width:200px;text-align:center;top:557.59px;line-height:20px;">#3412</div>
<div class="a" style="left:1307.0px;width:200px;text-align:center;top:557.59px;line-height:20px;">Cleared</div>
<svg class="a" style="left:303px;top:599.6px" width="18" height="17" viewBox="0 0 18 17"><rect x="0.6" y="0.6" width="16.8" height="12" rx="1.8" fill="#DCD2C0" stroke="#A79A85" stroke-width="1.1"/><rect x="2.3" y="2.4" width="13.4" height="8.4" fill="#EFE9DE" stroke="#C2B6A2" stroke-width=".6"/><ellipse cx="9" cy="6.6" rx="1.8" ry="2.6" fill="#E4DCCD" stroke="#8F8370" stroke-width=".9"/><path d="M3 5.6h4M3 7.6h4M11 5.6h4M11 7.6h4" stroke="#B5A994" stroke-width=".9"/><rect x="3.3" y="9.2" width="5.2" height="5.8" rx="1.2" fill="#E3C163" stroke="#BF9E45" stroke-width=".6"/><rect x="8.2" y="8.2" width="7.8" height="8" rx="1.4" fill="#EACB6C" stroke="#BF9E45" stroke-width=".6"/><path d="M8.8 10.3h6.6M8.8 12.3h6.6M8.8 14.3h6.6M3.8 11.3h4.3M3.8 13.3h4.3" stroke="#D0AF52" stroke-width=".6"/></svg>
<div class="a" style="left:342.7px;top:596.77px;line-height:20px;">13/11/2015 17:56:19</div>
<div class="a" style="left:551.7px;top:596.77px;line-height:20px;">Direct Referral ()</div>
<div class="a" style="left:986.4px;width:200px;text-align:center;top:596.77px;line-height:20px;">$0.6 (30%)</div>
<div class="a" style="left:1153.0px;width:200px;text-align:center;top:596.77px;line-height:20px;">#3321</div>
<div class="a" style="left:1307.0px;width:200px;text-align:center;top:596.77px;line-height:20px;">Cleared</div>
<div class="a" style="left:290.5px;top:642.55px;line-height:20px;">Showing 1 to 10 of 10 results</div>
<div class="a" style="left:1422px;top:636px;width:266px;height:35px;border-radius:4px;background:#DDDDDD"></div>
<div class="a" style="left:1433.6px;top:643.75px;line-height:20px;font-weight:bold;color:#777;font-size:14.3px">First</div>
<div class="a" style="left:1485.7px;top:643.75px;line-height:20px;font-weight:bold;color:#777;font-size:14.3px">Previous</div>
<div class="a" style="left:1567.0px;top:643.75px;line-height:20px;font-weight:bold;color:#fff">1</div>
<div class="a" style="left:1595.7px;top:643.75px;line-height:20px;font-weight:bold;color:#777;font-size:14.3px">Next</div>
<div class="a" style="left:1647.7px;top:643.75px;line-height:20px;font-weight:bold;color:#777;font-size:14.3px">Last</div>
<div id="foot"></div>
<div class="a" style="left:276.0px;top:1093.55px;line-height:20px;">Copyright &copy; 2025 File Upload Script</div>
<div class="a" style="right:21px;top:1093.55px;line-height:20px">Created by <b style="color:#5A738E">Yetishare</b>, a <b style="color:#5A738E">MFScripts</b> company &nbsp;|&nbsp; <b style="color:#5A738E">v5.6.0</b> &nbsp;|&nbsp; <b style="color:#5A738E">Support</b></div>
</body></html>
